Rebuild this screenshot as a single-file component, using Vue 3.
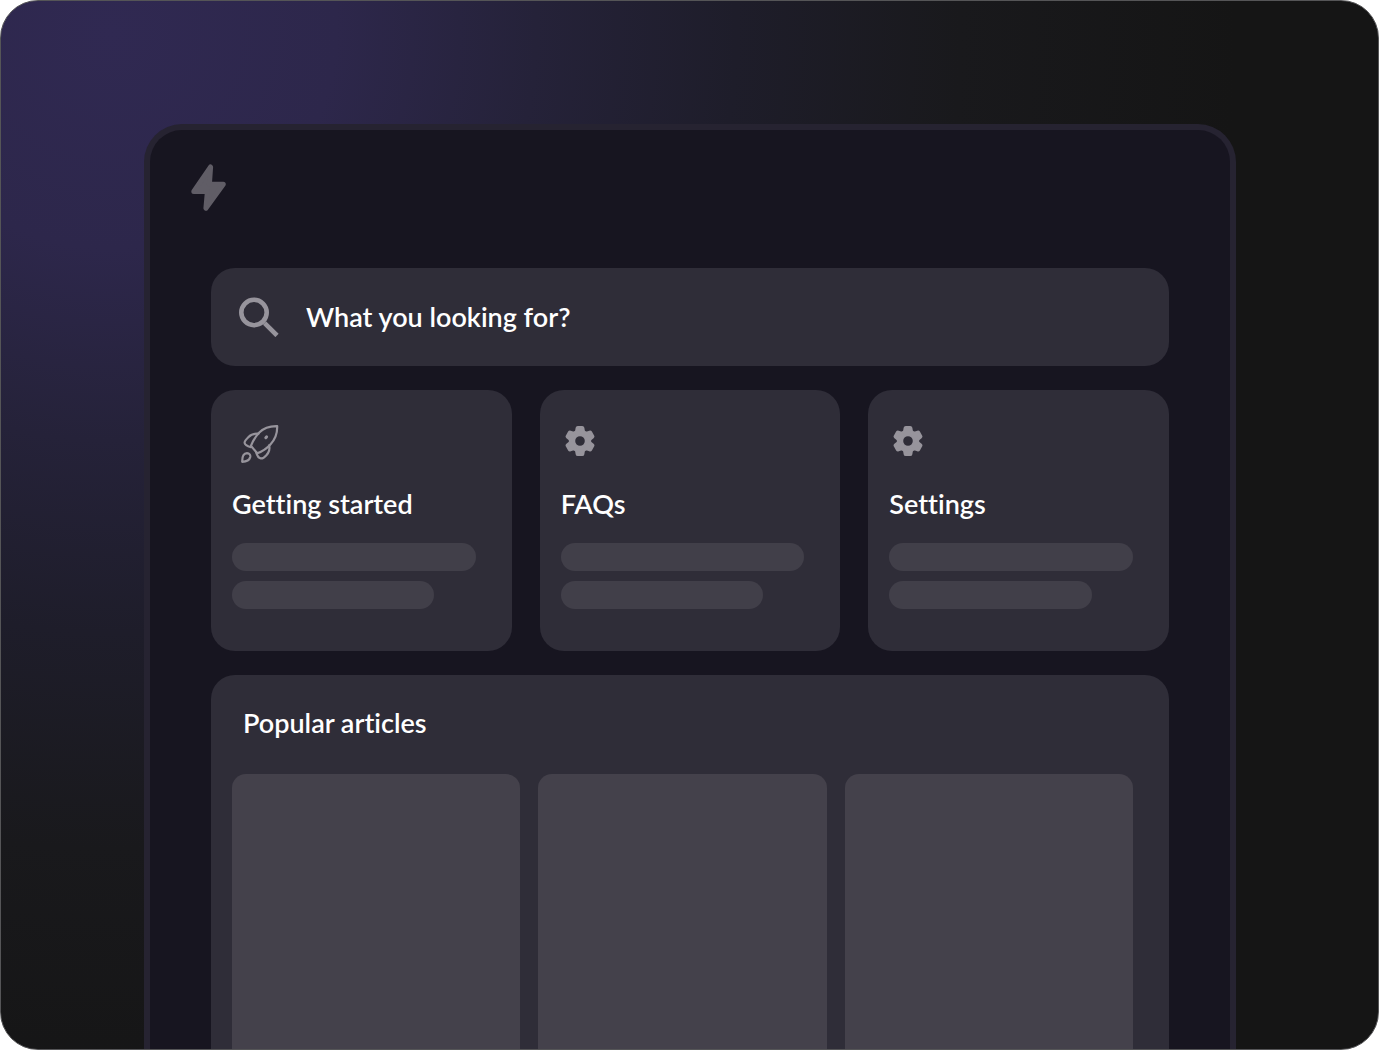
<template>
    <main class="page">
        <div class="panel">
            <header class="head">
                <svg class="bolt" viewBox="0 0 35 47" aria-hidden="true">
                    <path d="M19.6 3L18.4 20.3H32.3L14.9 44.2L16.4 27.500H2.8Z" />
                </svg>
            </header>
            <label class="search">
                <svg class="glass" viewBox="0 0 40 40" aria-hidden="true">
                    <circle cx="15" cy="15.5" r="12.7" />
                    <path d="M24 24.5L25.6 26.1" stroke-width="3" />
                    <path d="M25.6 26.1L38 38.5" />
                </svg>
                <input v-model="query" type="text" placeholder="What you looking for?" aria-label="Search">
            </label>
            <nav class="cards">
                <a v-for="card in cards" :key="card.title" class="card" href="#">
                    <svg v-if="card.icon === 'rocket'" class="rocket" viewBox="0 0 38 38" aria-hidden="true">
                        <path d="M36.2 1.2C29 1 22.5 3.2 18.3 7.6C14.5 11.6 11.8 15.8 9.9 20.8L16.2 28.3C21.5 26.3 26 23.4 29.6 19.2C33.8 14.8 36.4 8.6 36.2 1.2Z" />
                        <path d="M17.5 8.6C13.5 8.4 9.8 9.6 7.3 12.2C5 14.5 3.4 16.2 3.6 17.8C3.9 20 7 21.3 10 22.2" />
                        <path d="M28.2 20.4C29 23.8 27.9 27.4 25.4 30.2C23 32.9 21.3 33.7 19.7 33.4C17.4 33 16 30.2 15.2 27.4" />
                        <path d="M1.2 36.8C1.1 32.6 2.2 28.3 6 28.1C8.4 28.1 9.7 30 9.2 32.1C8.3 35.5 4.7 36.7 1.2 36.8Z" />
                        <path class="port" d="M24.8 12.7L25.6 11.9" />
                    </svg>
                    <svg v-else class="gear" viewBox="-15 -15 30 30" aria-hidden="true">
                        <circle r="8" />
                        <path v-for="n in 6" :key="n" d="M-3 -8L-2.2 -12.8H2.2L3 -8Z" :transform="`rotate(${n * 60})`" />
                    </svg>
                    <h2>{{ card.title }}</h2>
                    <span class="bar"></span>
                    <span class="bar short"></span>
                </a>
            </nav>
            <section class="popular">
                <h2>Popular articles</h2>
                <div class="tiles">
                    <div v-for="n in 3" :key="n" class="tile"></div>
                </div>
            </section>
        </div>
    </main>
</template>

<script setup>
import {
    ref,
} from 'vue';
const query = ref('');
const cards = [
    { title: 'Getting started', icon: 'rocket' },
    { title: 'FAQs', icon: 'gear' },
    { title: 'Settings', icon: 'gear' },
]
</script>

<style>
body {
    background: #fff;
}
</style>

<style scoped>
.page {
    box-sizing: border-box;
    display: flex;
    min-height: 100vh;
    padding: 123px 142px 0 143px;
    overflow: hidden;
    border: 1px solid #555557;
    border-radius: 38px;
    background: radial-gradient(ellipse 1250px 1200px at 8% 3%, #302952 0%, #2d274b 18%, #252239 34%, #1e1d2a 50%, #19191c 68%, #151515 90%);
    color: #fff;
    font-family: Lato, "Open Sans", sans-serif;
    font-variant-ligatures: none;
}

.panel {
    flex: 1;
    display: flex;
    flex-direction: column;
    gap: 24px;
    padding: 34px 61px 0;
    border: 6px solid #262331;
    border-bottom: 0;
    border-radius: 38px 38px 0 0;
    background: #171520;
}

.head {
    height: 80px;
    margin-left: -20px;
}

.bolt {
    display: block;
    width: 35px;
    height: 47px;
    fill: #605d66;
    stroke: #605d66;
    stroke-width: 5;
    stroke-linejoin: round;
}

.search {
    box-sizing: border-box;
    display: flex;
    align-items: center;
    gap: 27px;
    height: 98px;
    padding: 0 28px;
    border-radius: 24px;
    background: #2f2d38;
}

.glass {
    flex: none;
    width: 40px;
    height: 40px;
    fill: none;
    stroke: #97949c;
    stroke-width: 4.6;
}

input {
    flex: 1;
    min-width: 0;
    padding: 0;
    border: 0;
    outline: 0;
    background: none;
    color: #fff;
    font: 600 27px/32px Lato, "Open Sans", sans-serif;
}

input::placeholder {
    color: #fff;
    opacity: 1;
}

.cards {
    display: grid;
    grid-template-columns: repeat(3, 1fr);
    gap: 28px;
}

.card {
    display: flex;
    flex-direction: column;
    padding: 35px 36px 42px 21px;
    border-radius: 24px;
    background: #2f2d38;
    color: #fff;
    text-decoration: none;
}

.rocket {
    width: 38px;
    height: 38px;
    margin-left: 9px;
    fill: none;
    stroke: #97949c;
    stroke-width: 2.2;
    stroke-linejoin: round;
    stroke-linecap: round;
}

.port {
    stroke-width: 3;
}

.gear {
    width: 30px;
    height: 30px;
    margin: 1px 0 7px 4px;
    fill: #97949c;
    stroke: #97949c;
    stroke-width: 4.4;
    stroke-linejoin: round;
}

.gear circle {
    fill: none;
    stroke-width: 6.4;
}

h2 {
    margin: 0;
    font-size: 27px;
    font-weight: 600;
    line-height: 32px;
}

.card h2 {
    margin: 25px 0 23px;
}

.bar {
    height: 28px;
    border-radius: 14px;
    background: #413f49;
}

.short {
    width: 83%;
    margin-top: 10px;
}

.popular {
    flex: 1;
    display: flex;
    flex-direction: column;
    padding: 32px 36px 0 21px;
    border-radius: 24px 24px 0 0;
    background: #2f2d38;
}

.popular h2 {
    margin: 0 11px 35px;
}

.tiles {
    flex: 1;
    display: grid;
    grid-template-columns: repeat(3, 1fr);
    gap: 18px;
    min-height: 240px;
}

.tile {
    border-radius: 14px 14px 0 0;
    background: #44414b;
}
</style>
